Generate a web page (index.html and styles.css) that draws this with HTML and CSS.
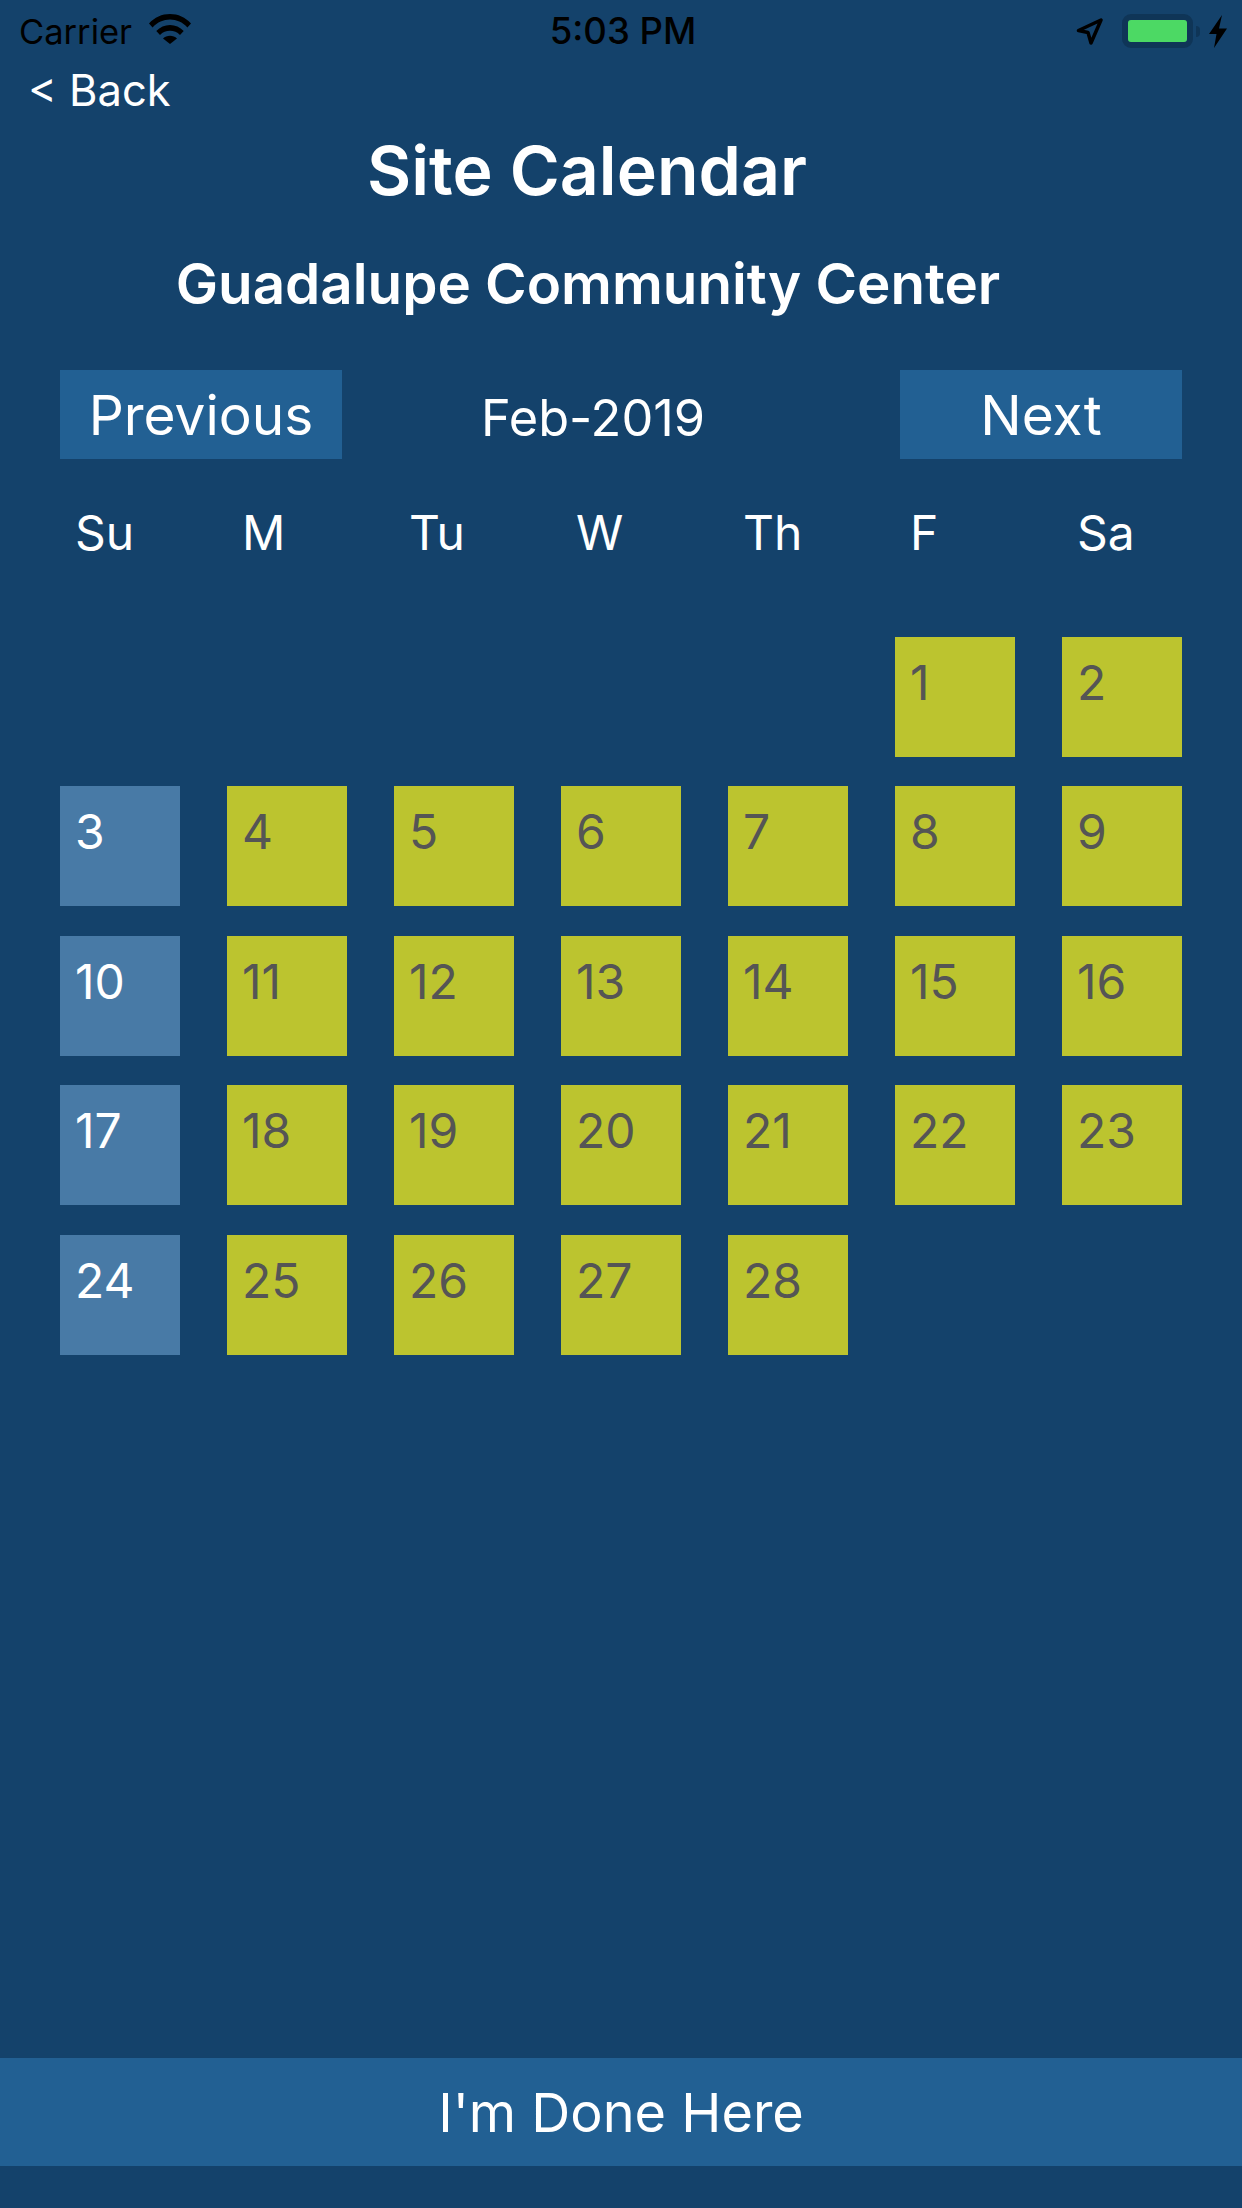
FILE: index.html
```html
<!DOCTYPE html>
<html lang="en">
<head>
    <meta charset="UTF-8">
    <meta name="viewport" content="width=device-width, initial-scale=1.0">
    <title>Site Calendar</title>
    <link rel="stylesheet" href="styles.css">
</head>
<body>
    <div class="status-bar">
        <div class="status-left">
            <span class="carrier">Carrier</span>
            <svg class="wifi" width="42" height="30" viewBox="0 0 42 30">
                <path d="M0 9.500C5.500 3.300 13 0 21 0s15.500 3.300 21 9.500l-3.600 4C33.600 8.300 27.500 5.600 21 5.600S8.400 8.300 3.600 13.500z"/>
                <path d="M7.300 17C11 13 15.800 11 21 11s10 2 13.700 6l-3.700 4C28.300 18.200 24.800 16.800 21 16.800s-7.300 1.400-10 4.200z"/>
                <path d="M14 24.500c1.900-1.800 4.300-2.800 7-2.800s5.100 1 7 2.800L21 30z"/>
            </svg>
        </div>
        <div class="status-time">5:03 PM</div>
        <div class="status-right">
            <svg class="location" width="27" height="27" viewBox="0 0 27 27">
                <path d="M2.500 12.500 25 2 15 25 12 14.500z" fill="none" stroke="#000" stroke-width="3.500" stroke-linejoin="round"/>
            </svg>
            <div class="battery"><div class="battery-fill"></div></div>
            <div class="battery-cap"></div>
            <svg class="bolt" width="18" height="33" viewBox="0 0 18 33">
                <path d="M13 0 0 19h7.500L5 33 18 13.500h-8z"/>
            </svg>
        </div>
    </div>

    <a class="back">&lt; Back</a>
    <h1>Site Calendar</h1>
    <h2>Guadalupe Community Center</h2>

    <div class="month-nav">
        <button class="nav-btn">Previous</button>
        <div class="month">Feb-2019</div>
        <button class="nav-btn">Next</button>
    </div>

    <div class="weekdays">
        <div>Su</div><div>M</div><div>Tu</div><div>W</div><div>Th</div><div>F</div><div>Sa</div>
    </div>

    <div class="calendar">
        <div></div><div></div><div></div><div></div><div></div>
        <div class="day">1</div>
        <div class="day">2</div>

        <div class="day sunday">3</div>
        <div class="day">4</div>
        <div class="day">5</div>
        <div class="day">6</div>
        <div class="day">7</div>
        <div class="day">8</div>
        <div class="day">9</div>

        <div class="day sunday">10</div>
        <div class="day">11</div>
        <div class="day">12</div>
        <div class="day">13</div>
        <div class="day">14</div>
        <div class="day">15</div>
        <div class="day">16</div>

        <div class="day sunday">17</div>
        <div class="day">18</div>
        <div class="day">19</div>
        <div class="day">20</div>
        <div class="day">21</div>
        <div class="day">22</div>
        <div class="day">23</div>

        <div class="day sunday">24</div>
        <div class="day">25</div>
        <div class="day">26</div>
        <div class="day">27</div>
        <div class="day">28</div>
    </div>

    <button class="done">I'm Done Here</button>
</body>
</html>
```

FILE: styles.css
```css
* {
    box-sizing: border-box;
}
body {
    font-family: Inter, "Liberation Sans", sans-serif;
    font-weight: 370;
    margin: 0;
    width: 1242px;
    height: 2208px;
    background-color: #14426b;
    color: #fff;
    display: flex;
    flex-direction: column;
    overflow: hidden;
}
button {
    font-family: inherit;
    font-weight: inherit;
    color: #fff;
    background: #226093;
    border: none;
    padding: 0;
}

.status-bar {
    height: 60px;
    display: grid;
    grid-template-columns: 1fr auto 1fr;
    align-items: center;
    padding: 2px 15px 0 19px;
    color: #000;
    font-size: 34.5px;
    font-weight: 400;
}
.status-left {
    display: flex;
    align-items: center;
    gap: 17px;
}
.status-time {
    font-size: 36.5px;
    font-weight: 500;
}
.status-right {
    display: flex;
    align-items: center;
    justify-content: flex-end;
}
.wifi {
    margin-top: -4px;
}
.location {
    margin-right: 19px;
}
.battery {
    width: 71px;
    height: 34px;
    border: 6px solid #0f3557;
    border-radius: 9px;
}
.battery-fill {
    height: 100%;
    background: #4cd964;
    border-radius: 3px;
}
.battery-cap {
    width: 4px;
    height: 11px;
    margin-left: 3px;
    margin-right: 9px;
    background: #0f3557;
    border-radius: 0 4px 4px 0;
}

.back {
    height: 60px;
    margin-left: 28px;
    font-size: 43.5px;
    line-height: 60px;
}
h1 {
    margin: 0;
    padding-right: 68px;
    height: 100px;
    font-size: 68px;
    font-weight: 600;
    line-height: 100px;
    text-align: center;
}
h2 {
    margin: 0;
    padding-right: 66px;
    height: 128px;
    font-size: 56.5px;
    font-weight: 600;
    line-height: 128px;
    text-align: center;
}

.month-nav {
    display: flex;
    justify-content: space-between;
    align-items: center;
    margin: 22px 60px 0;
}
.nav-btn {
    width: 282px;
    height: 89px;
    font-size: 55px;
}
.month {
    font-size: 50.5px;
    margin: 6px 56px 0 0;
}

.weekdays {
    display: grid;
    grid-template-columns: repeat(7, 120px);
    column-gap: 47px;
    margin: 42px 60px 0;
    padding-top: 2px;
    font-size: 48px;
    height: 135.5px;
}
.weekdays div {
    padding-left: 15px;
}

.calendar {
    display: grid;
    grid-template-columns: repeat(7, 120px);
    grid-auto-rows: 120px;
    column-gap: 47px;
    row-gap: 29.6px;
    margin: 0 60px;
}
.day {
    background: #bcc42f;
    color: #555;
    font-size: 48px;
    padding: 16px 0 0 15px;
}
.sunday {
    background: #487aa6;
    color: #fff;
}

.done {
    margin-top: auto;
    margin-bottom: 42px;
    height: 108px;
    font-size: 54px;
}
```
